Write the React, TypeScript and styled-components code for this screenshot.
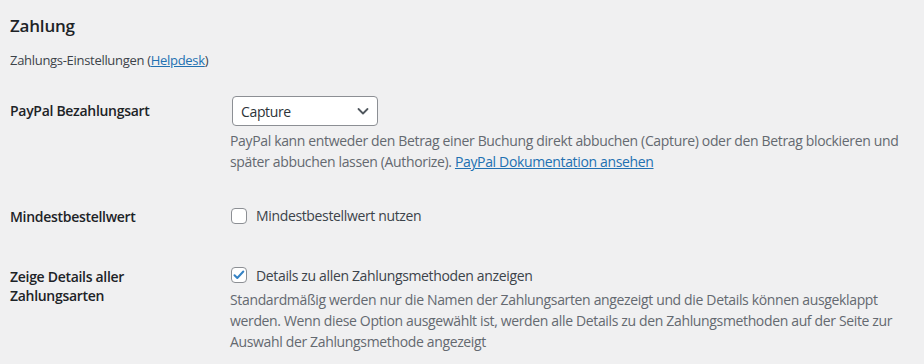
import React from "react";
import styled, { createGlobalStyle } from "styled-components";

const Global = createGlobalStyle`
  html, body { margin: 0; padding: 0; }
  body {
    background: #f0f0f1;
    color: #3c434a;
    font-family: "Open Sans", "Noto Sans", sans-serif;
    font-size: 13px;
    line-height: 1.4em;
  }
`;

const Page = styled.div`
  padding: 0 10px;
`;

const Title = styled.h2`
  margin: 0;
  padding-top: 15px;
  font-size: 17px;
  font-weight: 600;
  line-height: 22px;
  letter-spacing: -0.2px;
  color: #1d2327;
`;

const Intro = styled.p`
  margin: 14px 0 0;
  font-size: 13px;
  line-height: 18px;
  letter-spacing: -0.3px;
  color: #3c434a;
`;

const Link = styled.a`
  color: #2271b1;
  text-decoration: underline;
`;

const Table = styled.div`
  margin-top: 12px;
  display: flex;
  flex-direction: column;
`;

const Row = styled.div`
  display: grid;
  grid-template-columns: 210px 1fr;
`;

const Th = styled.div`
  padding: 20px 10px 20px 0;
  font-size: 14px;
  font-weight: 600;
  line-height: 1.4;
  letter-spacing: -0.3px;
  color: #1d2327;
`;

const Td = styled.div`
  padding: 15px 0 15px 10px;
  font-size: 14px;
  line-height: 1.5;
  letter-spacing: -0.35px;
  color: #3c434a;
`;

const SelectBox = styled.div`
  box-sizing: border-box;
  width: 146px;
  height: 30px;
  margin-left: 2px;
  border: 1px solid #8c8f94;
  border-radius: 4px;
  background: #fff;
  display: flex;
  align-items: center;
  justify-content: space-between;
  padding: 0 6px 0 8px;
  color: #2c3338;
  font-size: 14px;
`;

const Description = styled.p<{ $top?: number }>`
  margin: ${(p) => p.$top ?? 4}px 0 0;
  font-size: 14px;
  line-height: 21px;
  color: #646970;
`;

const CheckLabel = styled.label`
  display: flex;
  align-items: center;
  height: 27px;
  gap: 9px;
  color: #3c434a;
  font-size: 14px;
`;

const Box = styled.span`
  box-sizing: border-box;
  width: 16px;
  height: 16px;
  margin-left: 1px;
  border: 1px solid #8c8f94;
  border-radius: 4px;
  background: #fff;
  display: inline-flex;
  align-items: center;
  justify-content: center;
  flex: none;
`;

const Chevron = () => (
  <svg width="16" height="16" viewBox="0 0 16 16" fill="none">
    <path d="M3.5 6l4.5 4.5 4.5-4.5" stroke="#50575e" strokeWidth="1.8" strokeLinecap="round" strokeLinejoin="round" />
  </svg>
);

const Check = () => (
  <svg width="14" height="14" viewBox="0 0 14 14" fill="none">
    <path d="M2.5 7.2l2.8 2.8 6-6.5" stroke="#3582c4" strokeWidth="2" strokeLinecap="round" strokeLinejoin="round" />
  </svg>
);

export default function App() {
  return (
    <>
      <Global />
      <Page>
        <Title>Zahlung</Title>
        <Intro>
          Zahlungs-Einstellungen (<Link href="#">Helpdesk</Link>)
        </Intro>
        <Table>
          <Row>
            <Th>PayPal Bezahlungsart</Th>
            <Td>
              <SelectBox>
                <span>Capture</span>
                <Chevron />
              </SelectBox>
              <Description>
                PayPal kann entweder den Betrag einer Buchung direkt abbuchen (Capture) oder den Betrag blockieren und
                später abbuchen lassen (Authorize). <Link href="#">PayPal Dokumentation ansehen</Link>
              </Description>
            </Td>
          </Row>
          <Row>
            <Th>Mindestbestellwert</Th>
            <Td>
              <CheckLabel>
                <Box />
                Mindestbestellwert nutzen
              </CheckLabel>
            </Td>
          </Row>
          <Row>
            <Th>Zeige Details aller Zahlungsarten</Th>
            <Td>
              <CheckLabel>
                <Box>
                  <Check />
                </Box>
                Details zu allen Zahlungsmethoden anzeigen
              </CheckLabel>
              <Description $top={0}>
                Standardmäßig werden nur die Namen der Zahlungsarten angezeigt und die Details können ausgeklappt
                werden. Wenn diese Option ausgewählt ist, werden alle Details zu den Zahlungsmethoden auf der Seite zur
                Auswahl der Zahlungsmethode angezeigt
              </Description>
            </Td>
          </Row>
        </Table>
      </Page>
    </>
  );
}
